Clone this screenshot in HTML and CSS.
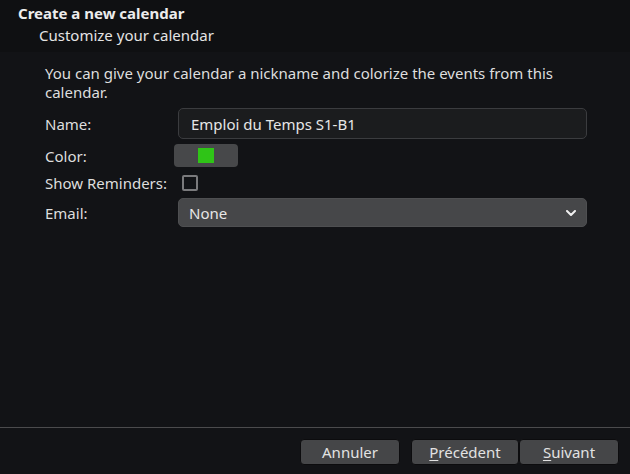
FILE: index.html
```html
<!DOCTYPE html>
<html><head><meta charset="utf-8"><link rel="stylesheet" href="styles.css"></head>
<body>
<div class="window">
  <header class="head">
    <div class="title">Create a new calendar</div>
    <div class="subtitle">Customize your calendar</div>
  </header>
  <main class="content">
    <p class="desc">You can give your calendar a nickname and colorize the events from this calendar.</p>
    <div class="form">
      <label class="lbl">Name:</label>
      <div class="field"><div class="entry">Emploi du Temps S1-B1</div></div>
      <label class="lbl">Color:</label>
      <div class="field"><div class="colorbtn"><span class="swatch"></span></div></div>
      <label class="lbl">Show Reminders:</label>
      <div class="field"><span class="check"></span></div>
      <label class="lbl">Email:</label>
      <div class="field"><div class="combo"><span>None</span>
        <svg class="chev" width="10" height="6" viewBox="0 0 10 6"><polyline points="1,1 5,5 9,1" fill="none" stroke="#f0f0f0" stroke-width="2" stroke-linecap="round" stroke-linejoin="round"/></svg>
      </div></div>
    </div>
  </main>
  <footer class="foot">
    <button class="btn w100">Annuler</button>
    <div class="pair">
      <button class="btn w108"><u>P</u>récédent</button>
      <button class="btn w100"><u>S</u>uivant</button>
    </div>
  </footer>
</div>
</body></html>
```
FILE: styles.css
```css
html,body{margin:0;padding:0}
body{background:#121316;color:#dedede;font-family:"Noto Sans",sans-serif;font-size:15px}
.window{display:flex;flex-direction:column;height:474px;width:630px}
.head{background:#0f1012;height:52px;box-sizing:border-box;padding-top:3px}
.title{font-weight:bold;color:#ececec;line-height:20px;padding-left:18px}
.subtitle{line-height:20px;margin-top:2px;padding-left:39px;color:#e4e4e4}
.content{flex:1;padding:0 43px 0 45px;box-sizing:border-box}
.desc{margin:12px 0 0;line-height:19px;width:542px}
.form{display:grid;grid-template-columns:129px 413px;grid-template-rows:31px 23px 21px 29px;row-gap:5px;align-items:center;margin-top:6px}
.lbl{white-space:nowrap}
.field{display:flex;align-items:center;height:100%}
.entry{margin-left:4px;flex:1;height:31px;box-sizing:border-box;border:1px solid #3b3c3f;border-radius:5px;background:#1b1c1e;padding-left:12px;display:flex;align-items:center;color:#e6e6e6}
.colorbtn{width:64px;height:23px;background:#47484a;border-radius:4px;display:flex;align-items:center;justify-content:center}
.swatch{width:16px;height:15px;background:#2fc417}
.check{margin-left:8px;width:16px;height:16px;box-sizing:border-box;border:2px solid #7a7a7c;border-radius:2px}
.combo{margin-left:4px;flex:1;height:29px;box-sizing:border-box;background:#464749;border:1px solid #4e4f51;border-radius:5px;padding:0 10px 0 10px;display:flex;align-items:center;justify-content:space-between;color:#e6e6e6}
.chev{display:block}
.foot{height:47px;border-top:1px solid #4b4b4d;box-sizing:border-box;display:flex;justify-content:flex-end;align-items:flex-start;padding:11px 11px 0 0;gap:11px}
.pair{display:flex}
.btn{font-family:"Noto Sans",sans-serif;font-size:15px;color:#e2e2e2;background:#454648;border:1px solid #0c0c0e;border-radius:4px;height:26px;padding:0 0 1px;line-height:22px}
.w100{width:100px}
.w108{width:108px}
.btn u{text-underline-offset:2px}
```
